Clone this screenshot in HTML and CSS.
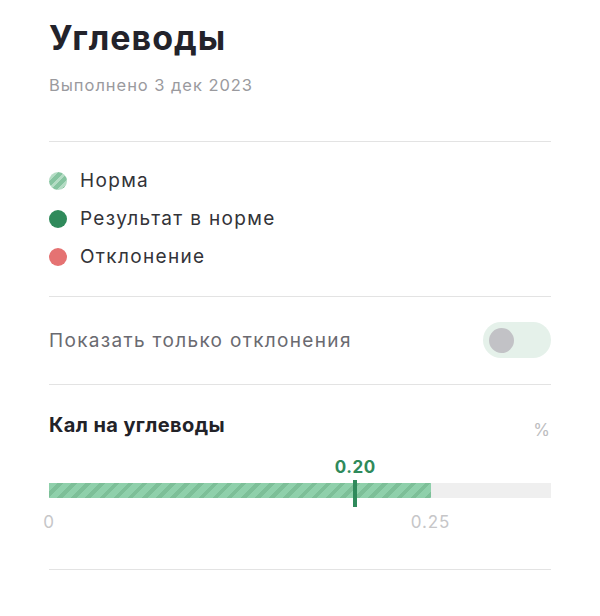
FILE: index.html
```html
<!DOCTYPE html>
<html lang="ru">
<head>
    <meta charset="UTF-8">
    <meta name="viewport" content="width=device-width, initial-scale=1.0">
    <title>Углеводы</title>
    <link rel="stylesheet" href="styles.css">
</head>
<body>

<div class="page">
    <div class="header">
        <h1>Углеводы</h1>
        <p class="date">Выполнено 3 дек 2023</p>
    </div>

    <ul class="legend">
        <li><span class="dot dot-norm"></span>Норма</li>
        <li><span class="dot dot-ok"></span>Результат в норме</li>
        <li><span class="dot dot-bad"></span>Отклонение</li>
    </ul>

    <div class="filter">
        <span>Показать только отклонения</span>
        <div class="toggle"><div class="knob"></div></div>
    </div>

    <div class="metric">
        <div class="metric-head">
            <h2>Кал на углеводы</h2>
            <span class="unit">%</span>
        </div>
        <div class="scale">
            <div class="value" style="left: 61%;">0.20</div>
            <div class="track">
                <div class="range" style="width: 76%;"></div>
            </div>
            <div class="marker" style="left: 61%;"></div>
            <div class="tick" style="left: 0%;">0</div>
            <div class="tick" style="left: 76%;">0.25</div>
        </div>
    </div>
</div>

</body>
</html>
```

FILE: styles.css
```css
* {
    box-sizing: border-box;
    margin: 0;
    padding: 0;
}
body {
    font-family: Inter, "Noto Sans", sans-serif;
    background: #fff;
    color: #2b2b33;
    letter-spacing: 0.06em;
}
.page {
    padding: 0 49px;
}
.header {
    padding-top: 17px;
    padding-bottom: 46px;
    border-bottom: 1px solid #e3e3e3;
}
h1 {
    font-size: 34px;
    font-weight: 700;
    line-height: 42px;
    color: #23232b;
    letter-spacing: 0.03em;
}
.date {
    margin-top: 16px;
    font-size: 16.5px;
    line-height: 20px;
    color: #9a9a9e;
}
.legend {
    list-style: none;
    padding: 20px 0 20px;
    border-bottom: 1px solid #e3e3e3;
}
.legend li {
    display: flex;
    align-items: center;
    gap: 13px;
    font-size: 19px;
    line-height: 38px;
    color: #333338;
    letter-spacing: 0.07em;
}
.dot {
    width: 18px;
    height: 18px;
    border-radius: 50%;
    flex-shrink: 0;
}
.dot-norm {
    background: repeating-linear-gradient(135deg, #86c4a0 0 4px, #b4dcc4 4px 7px);
}
.dot-ok {
    background: #2f8a5b;
}
.dot-bad {
    background: #e57272;
}
.filter {
    display: flex;
    align-items: center;
    justify-content: space-between;
    padding: 25px 0 26px;
    border-bottom: 1px solid #e3e3e3;
    font-size: 19px;
    color: #6a6a70;
    letter-spacing: 0.07em;
}
.toggle {
    width: 68px;
    height: 36px;
    border-radius: 18px;
    background: #e5f1ea;
    display: flex;
    align-items: center;
    padding-left: 6px;
}
.knob {
    width: 25px;
    height: 25px;
    border-radius: 50%;
    background: #c2c2c6;
}
.metric {
    padding-top: 28px;
    padding-bottom: 23px;
    border-bottom: 1px solid #e3e3e3;
}
.metric-head {
    display: flex;
    justify-content: space-between;
    align-items: flex-start;
}
h2 {
    font-size: 20px;
    font-weight: 700;
    line-height: 24px;
    color: #222228;
    letter-spacing: 0.02em;
}
.unit {
    margin-top: 7px;
    font-size: 17px;
    color: #bdbdc0;
}
.scale {
    position: relative;
    height: 96px;
    margin-top: 10px;
}
.value {
    position: absolute;
    top: 7px;
    transform: translateX(-50%);
    font-size: 17px;
    font-weight: 700;
    color: #2f8a5b;
    letter-spacing: 0.03em;
}
.track {
    position: absolute;
    top: 33px;
    left: 0;
    right: 0;
    height: 15px;
    background: #efefef;
}
.range {
    height: 100%;
    background: repeating-linear-gradient(135deg, #8fd0ab 0 6px, #7dbf98 6px 10px);
}
.marker {
    position: absolute;
    top: 30px;
    width: 4px;
    height: 27px;
    margin-left: -2px;
    background: #2f8a5b;
}
.tick {
    position: absolute;
    top: 62px;
    transform: translateX(-50%);
    font-size: 17px;
    color: #c6c6c8;
}
```
